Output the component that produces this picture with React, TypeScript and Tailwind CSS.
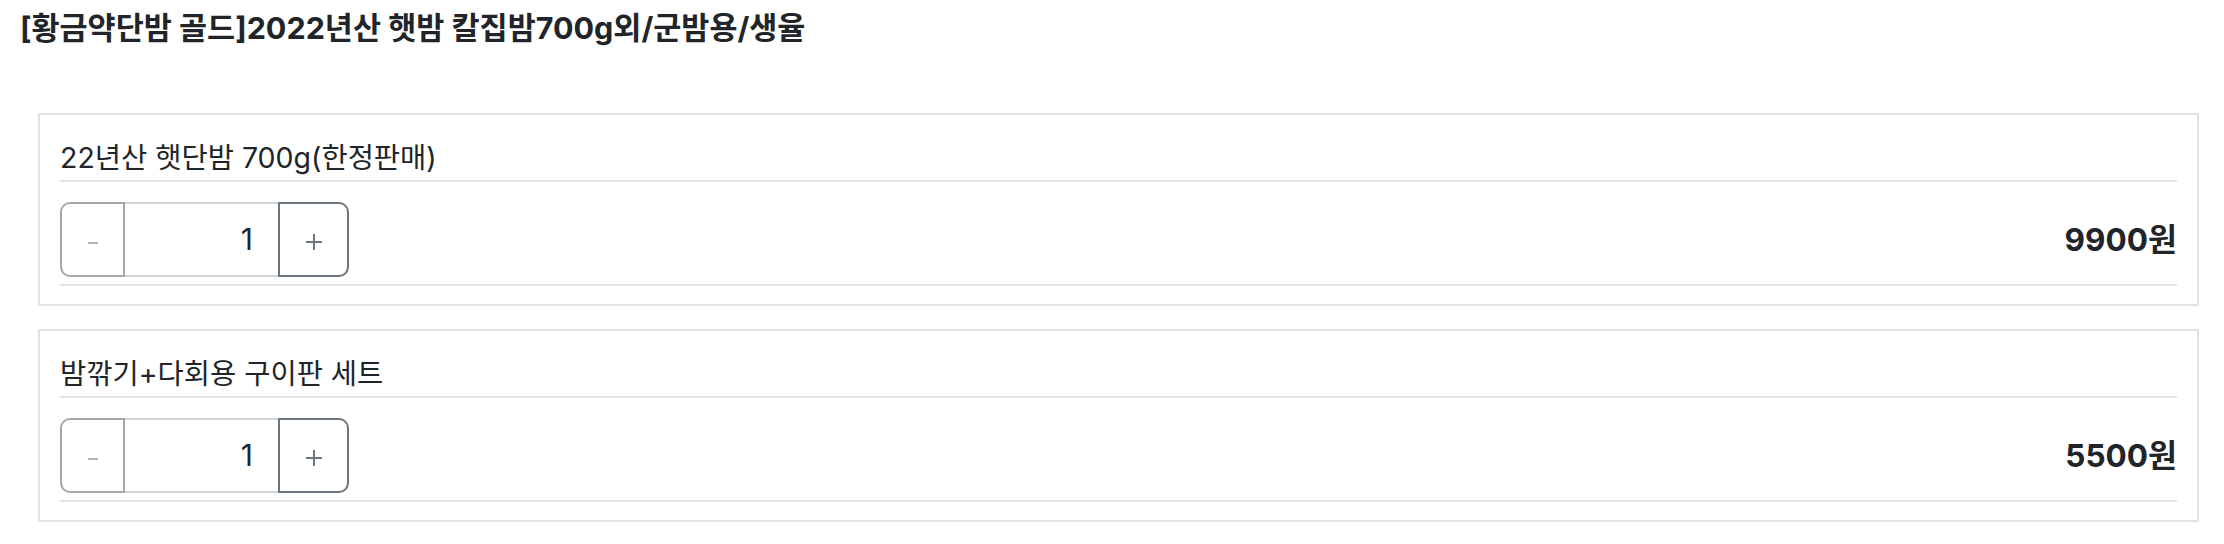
import React from "react";

const options = [
  { name: "22년산 햇단밤 700g(한정판매)", qty: 1, price: "9900원" },
  { name: "밤깎기+다회용 구이판 세트", qty: 1, price: "5500원" },
];

function QtyBox({ qty }: { qty: number }) {
  return (
    <div className="flex h-[75px]">
      <button className="flex w-[65px] items-center justify-center rounded-l-[10px] border-2 border-[#a3a8ad] bg-white pt-[6px]">
        <svg width="10" height="2" viewBox="0 0 10 2">
          <rect width="10" height="2" fill="#adb5bd" />
        </svg>
      </button>
      <div className="flex w-[153px] items-center justify-end border-y-2 border-[#ced4da] bg-white pr-[25px] text-[30px] text-[#212529]">
        {qty}
      </div>
      <button className="flex w-[71px] items-center justify-center rounded-r-[10px] border-2 border-[#6c757d] bg-white pt-[5px]">
        <svg width="16" height="16" viewBox="0 0 16 16">
          <rect x="7" y="0" width="2" height="16" fill="#6c757d" />
          <rect x="0" y="7" width="16" height="2" fill="#6c757d" />
        </svg>
      </button>
    </div>
  );
}

export default function App() {
  return (
    <div
      className="min-h-[544px] bg-white text-[#212529]"
      style={{ fontFamily: '"Inter", "Noto Sans CJK KR", sans-serif' }}>
      {/* Product title */}
      <h1 className="px-[20px] pt-[10px] text-[30.5px] font-bold leading-[36px]">
        [황금약단밤 골드]2022년산 햇밤 칼집밤700g외/군밤용/생율
      </h1>

      <div className="mt-[67px] ml-[38px] mr-[25px] flex flex-col gap-[23px]">
        {options.map((o) => (
          <div
            key={o.name}
            className="border-2 border-[#e2e2e2] px-[20px] pt-[20px] pb-[18px]">
            <div className="border-b-2 border-[#e2e2e2] text-[28.5px] leading-[45px]">
              {o.name}
            </div>
            <div className="flex items-center justify-between border-b-2 border-[#e2e2e2] pt-[20px] pb-[7px]">
              <QtyBox qty={o.qty} />
              <span className="text-[31.5px] font-bold">{o.price}</span>
            </div>
          </div>
        ))}
      </div>
    </div>
  );
}
